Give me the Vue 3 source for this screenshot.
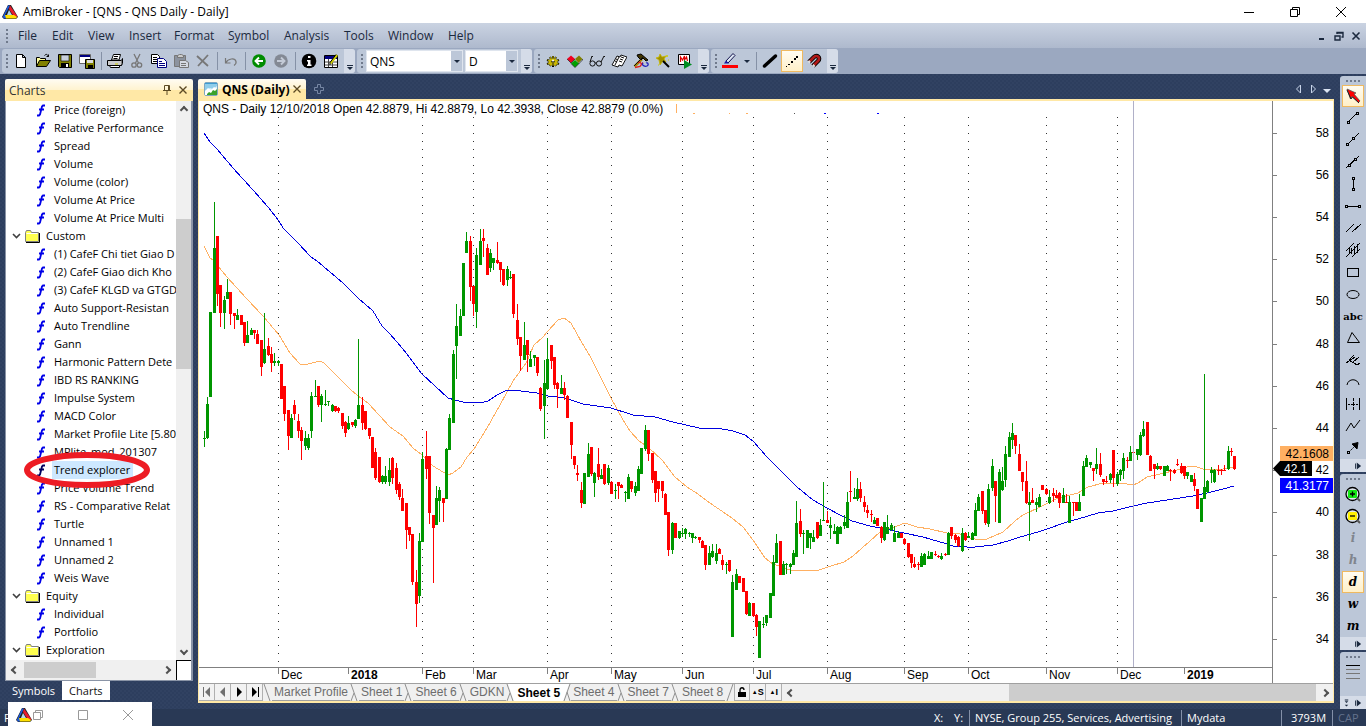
<script setup>
const menus = ['File', 'Edit', 'View', 'Insert', 'Format', 'Symbol', 'Analysis', 'Tools', 'Window', 'Help']

const fileTools = [
  { name: 'New', icon: '<path d="M3.5 1.5h6l3 3v10h-9zM9.500 1.500v3h3" fill="#fff" stroke="#000"/>' },
  { name: 'Open', icon: '<path d="M1.500 13.500v-9h3l1 1h5v2" fill="#ffffa0" stroke="#000"/><path d="M1.500 13.500l3-6h11l-4 6z" fill="#808000" stroke="#000"/><path d="M9.500 2.500c2-2 3-1 4 1m0-2v2h-2" fill="none" stroke="#000"/>' },
  { name: 'Save', icon: '<path d="M1.500 1.500h13v13h-12l-1-1z" fill="#808000" stroke="#000"/><path d="M4 2h8v6H4z" fill="#c8cfda" stroke="#000" stroke-width=".6"/><path d="M4 10h8v4H4z" fill="#000"/><path d="M9 11h2v3H9z" fill="#fff"/>' },
  { name: 'Save all', icon: '<path d="M.5 1.500h11v9H.5z" fill="#fff" stroke="#666"/><path d="M1 2h10v2H1z" fill="#000080"/><path d="M6.500 6.500h9v9h-9z" fill="#808000" stroke="#000"/><path d="M8 7h6v3H8z" fill="#ddd"/><path d="M9 12h5v3H9z" fill="#000"/>' },
  { sep: true },
  { name: 'Print', icon: '<path d="M4.500 7L6.500 1.500h7L12 7z" fill="#fff" stroke="#000"/><path d="M.5 7.500h14v5H.5z" fill="#ccc" stroke="#000"/><path d="M2.500 12.500h10v2h-9zM14.500 7.500l1-2v5l-1 2M7 3.500h4M6.500 5.500h4" fill="#fff" stroke="#000"/><path d="M8 11h3" stroke="#cc0"/>' },
  { name: 'Cut', icon: '<g fill="none" stroke="#777" stroke-width="1.300"><path d="M5 1l4.500 9M11 1L6.500 10"/><circle cx="5" cy="12" r="2.200"/><circle cx="10.500" cy="12" r="2.200"/></g>' },
  { name: 'Copy', icon: '<path d="M.5 1.500h6l2 2v7h-8z" fill="#fff" stroke="#000"/><path d="M2 4.500h4M2 6.500h4M2 8.500h4" stroke="#000"/><path d="M6.500 5.500h6l3 3v6h-9z" fill="#fff" stroke="#000080"/><path d="M8 8.500h3M8 10.500h6M8 12.500h6" stroke="#000080"/>' },
  { name: 'Paste', icon: '<path d="M1.500 2.500h11v11h-11z" fill="#8c939f" stroke="#777"/><path d="M4.500 4.500v-2l2-1h2l2 1v2z" fill="#ccc" stroke="#777"/><path d="M6.500 7.500h6l3 2v5h-9z" fill="#d5dae3" stroke="#777"/><path d="M8 10.500h5M8 12.500h5" stroke="#777"/>' },
  { name: 'Delete', icon: '<path d="M2 3l11 10M13 2L3 13" stroke="#777" stroke-width="1.800"/>' },
  { sep: true },
  { name: 'Undo', icon: '<path d="M2.500 5v5h5M3 9.500c2-4 9-5 10-1 .5 2-.5 3-2 4" fill="none" stroke="#777" stroke-width="1.200"/>' },
  { sep: true },
  { name: 'Back', icon: '<circle cx="8" cy="8" r="6.800" fill="#008c00"/><path d="M12 8H5M8 4.500L4.500 8 8 11.500" fill="none" stroke="#fff" stroke-width="1.900"/>' },
  { name: 'Forward', icon: '<circle cx="8" cy="8" r="6.800" fill="#838994"/><path d="M4 8h7M8 4.500L11.500 8 8 11.500" fill="none" stroke="#c3cad6" stroke-width="1.900"/>' },
  { sep: true },
  { name: 'Information', icon: '<circle cx="8" cy="8" r="7.300" fill="#000"/><path d="M7 3h2.500v2H7zM6 7h3.500v4.500h1V13H6v-1.500h1V8.500H6z" fill="#fff"/>' },
  { name: 'Quote editor', icon: '<path d="M1.500 2.500h13v12h-13z" fill="#fff" stroke="#000"/><path d="M2 3h12v3H2z" fill="#000080"/><path d="M2 9h12M2 12h12M5.500 6v8M9.500 6v8" stroke="#444"/><path d="M7.500 10.500L14 2" stroke="#cc0" stroke-width="2.200"/><path d="M7 12V9.500L13 1.500" fill="none" stroke="#000"/>' },
]

const analysisTools = [
  { name: 'Settings', icon: '<path d="M8 3v3M5 4l1 2M11 4l-1 2M2 7l3 1M14 7l-3 1M2 11l3-1M14 11l-3-1M5 13l1-2M8 14v-3M11 13l-1-2" stroke="#000" stroke-width="2"/><ellipse cx="8" cy="9" rx="4.500" ry="3.500" fill="#c9b800"/><path d="M8 3v3M5 4l1 2M11 4l-1 2M2.500 7l3 1M13.500 7l-3 1M2.500 11l3-1M13.500 11l-3-1M5 13l1-2M11 13l-1-2" stroke="#c9b800" stroke-width="1"/><path d="M6 9l2-1v4M10 9l-2-1" stroke="#222" fill="none"/><circle cx="8" cy="7.500" r="1" fill="#fff"/>' },
  { name: 'Formula', icon: '<path d="M0 6l4-3.500 4 3.500-4 4z" fill="#f00020"/><path d="M8 6l4-3.500L15.500 6l-4 4z" fill="#808000"/><path d="M4 10.500L8 7l4 3.500-4 4z" fill="#00a000"/><path d="M0 6l4 4 4-4M15.500 6v1l-4 4M4 10.500l4 4 4-4" fill="none" stroke="#222" stroke-width=".7"/>' },
  { name: 'Watch', icon: '<g fill="none" stroke="#111"><circle cx="3.500" cy="10.500" r="2.600"/><circle cx="10" cy="10.500" r="2.600"/><path d="M6 10h1.500M1 9l2-6M12 9l3-6 1 1M3 3l1 1"/></g>' },
  { name: 'Report', icon: '<path d="M1 12l5-9 3 1 1-2 6 2-5 9-3-1-1 2z" fill="#fff" stroke="#111"/><path d="M8 4L4 12M10 4l3 1M9 6l3 1M8 8l3 1M5 6l2 1M4 8l2 1" fill="none" stroke="#111"/>' },
  { name: 'Build', icon: '<path d="M1.500 13.500L9 6" stroke="#a88a00" stroke-width="2.500"/><path d="M4 2l4-1 7 6-2 1-3-3-2 2-3-3z" fill="#403400" stroke="#000"/><path d="M1 13l9-9" stroke="#111"/><path d="M5 10l2-1 2 3M2 14.500l5-1 3-4" stroke="#e02020" fill="none" stroke-width="1.300"/><path d="M10 10c-2 2 2 4 4 3s1-4-1-3" stroke="#2020c0" fill="none" stroke-width="1.300"/>' },
  { name: 'Wizard', icon: '<path d="M5 1l2 3 4-1-2 3 2 3-3-1-3 4-1-5-3-2 3-1z" fill="#a09000" stroke="#c6b700" stroke-width=".8"/><path d="M8 8l6 6" stroke="#000" stroke-width="2"/><path d="M11 3h2M12 2v2M3 12h1M13 7h1" stroke="#cc0"/>' },
  { name: 'Scan', icon: '<path d="M1.500 1.500h11v10h-11z" fill="#fff" stroke="#000"/><path d="M3.500 9V4l2 3 2-4v4l2-3 1 4" fill="none" stroke="#e00000" stroke-width="1.200"/><path d="M7 7l8 4.500L7 16z" fill="#008c20"/>' },
]

const line = (extra) => `<g fill="none" stroke="#000" shape-rendering="crispEdges">${extra}</g>`
const knob = (x, y) => `<rect x="${x - 1}" y="${y - 1}" width="2" height="2" fill="#bcc7d8" stroke="#000"/>`

const drawTools = [
  { name: 'Select', active: true, icon: '<path d="M2 1l9 4-2 1 6 7-1.500 1.500L7 8.500 5.500 11z" fill="#f00" stroke="#555" stroke-width=".8"/><path d="M2 2l4 9 1.500-2 6.500 6" fill="none" stroke="#222"/>' },
  { name: 'Trend line', icon: line('<path d="M3 12L12 3"/>' + knob(3.500, 12.500) + knob(12.500, 3.500)) },
  { name: 'Ray', icon: line('<path d="M2 13L14 1"/>' + knob(2.500, 12.500) + knob(8.500, 6.500)) },
  { name: 'Extended line', icon: line('<path d="M1 14L14 2"/>' + knob(4.500, 11.500) + knob(10.500, 5.500)) },
  { name: 'Vertical line', icon: line('<path d="M8.500 2v12"/>' + knob(8.500, 2.500) + knob(8.500, 13.500)) },
  { name: 'Horizontal line', icon: line('<path d="M2 8.500h12"/>' + knob(1.500, 8.500) + knob(14.500, 8.500)) },
  { name: 'Parallel lines', icon: line('<path d="M1 12L9 4M7 12L16 4"/>') },
  { name: 'Channel', icon: line('<path d="M1 9L9 1M1 15L15 1M7 15L15 7M4 6v6M6 6v6M9 4v8M12 2v9"/>') },
  { name: 'Rectangle', icon: line('<path d="M2.500 4.500h11v8h-11z"/>') },
  { name: 'Ellipse', icon: '<ellipse cx="8" cy="8.500" rx="6" ry="4" fill="none" stroke="#000"/>' },
  { name: 'Text', text: 'abc' },
  { name: 'Triangle', icon: '<path d="M7 2.500L2.500 12.500h12z" fill="none" stroke="#000"/>' },
  { name: 'Pitchfork', icon: line('<path d="M1 11L10 5M4 8l8 5M4 8l5-5M8 10l6-5M12 13l3-2"/>') },
  { name: 'Arc', icon: '<path d="M2 11c1-7 11-7 12 0" fill="none" stroke="#000"/>' },
  { name: 'Cycles', icon: line('<path d="M1.500 2v12M14.500 2v12M8.500 2v3M8.500 6v4M8.500 11v3M3 8.500h2M6 8.500h4M11 8.500h2"/>') },
  { name: 'Zig zag', icon: '<path d="M1 13L6 5l3 5 6-8" fill="none" stroke="#000"/>' },
  { name: 'Arrow', icon: '<path d="M4 12l6-6" stroke="#000" stroke-dasharray="2 1"/><path d="M7 4l6-1.500L12 9z" fill="#000" stroke="#000"/><rect x="2.500" y="11.500" width="2" height="2" fill="#bcc7d8" stroke="#000"/>' },
]

const zoomIcon = (fill, glyph) => `<circle cx="7.500" cy="8" r="6.500" fill="#dfe5ee" stroke="#000" stroke-width="1.300"/><path d="M12 12l3 3" stroke="#555" stroke-width="2"/><rect x="3" y="4" width="9" height="8" rx="1" fill="${fill}"/><path d="${glyph}" stroke="#000" stroke-width="1.300"/>`
const zoomTools = [
  { name: 'Zoom in', icon: zoomIcon('#14e614', 'M5 8h5M7.500 5.500v5') },
  { name: 'Zoom out', icon: zoomIcon('#fff000', 'M5 8h5') },
  { name: 'Intraday', text: 'i', dim: true },
  { name: 'Hourly', text: 'h', dim: true },
  { name: 'Daily', text: 'd', active: true },
  { name: 'Weekly', text: 'w' },
  { name: 'Monthly', text: 'm' },
]

const tree = [
  'Price (foreign)', 'Relative Performance', 'Spread', 'Volume', 'Volume (color)', 'Volume At Price',
  'Volume At Price Multi', '>Custom', '(1) CafeF Chi tiet Giao D', '(2) CafeF Giao dich Kho',
  '(3) CafeF KLGD va GTGD', 'Auto Support-Resistan', 'Auto Trendline', 'Gann', 'Harmonic Pattern Dete',
  'IBD RS RANKING', 'Impulse System', 'MACD Color', 'Market Profile Lite [5.80', 'MPlite_mod_201307',
  'Trend explorer', 'Price Volume Trend', 'RS - Comparative Relat', 'Turtle', 'Unnamed 1', 'Unnamed 2',
  'Weis Wave', '>Equity', 'Individual', 'Portfolio', '>Exploration',
].map((t) => ({ folder: t[0] === '>', label: t.replace('>', ''), selected: t === 'Trend explorer' }))

const sheets = ['Market Profile', 'Sheet 1', 'Sheet 6', 'GDKN', 'Sheet 5', 'Sheet 4', 'Sheet 7', 'Sheet 8']

// One bar per entry: x, high, low, body top, body bottom; g = up, r = down.
const bars = `204 431 447 438 439 g,207 397 439 404 438 g,210 312 397 312 397 g,214 202 313 248 313 g,217 236 306 236 294 r,220 285 327 285 313 r,224 296 329 300 313 g,227 279 299 292 299 g,230 292 325 292 314 r,234 313 329 313 316 r,237 309 320 315 320 g,241 315 325 315 325 r,244 322 346 322 343 r,247 321 343 335 343 g,251 328 335 330 335 g,254 330 339 330 333 r,257 330 344 334 344 r,261 340 376 340 367 r,264 313 364 349 363 g,268 338 356 346 355 r,271 347 372 354 363 r,274 353 366 361 363 g,278 360 366 361 363 g,281 364 399 364 399 r,284 386 421 386 414 r,288 410 450 410 436 r,291 414 438 418 438 g,294 400 420 405 414 r,298 414 438 421 431 r,301 427 460 430 441 r,305 431 450 438 446 g,308 434 450 438 448 g,311 392 438 396 431 g,315 380 397 396 397 g,318 386 407 386 405 r,321 394 422 396 405 g,325 390 406 404 405 g,328 401 406 401 402 g,332 404 412 405 411 g,335 406 412 406 411 r,338 407 413 408 411 r,342 413 429 413 426 r,345 421 437 422 433 r,348 416 430 423 429 g,352 422 427 422 425 r,355 419 428 420 426 g,358 339 419 405 419 g,362 397 430 405 423 r,365 411 430 411 429 r,369 428 439 428 436 r,372 437 468 437 468 r,375 448 480 452 478 r,379 457 483 457 482 r,382 475 484 476 482 g,385 466 484 476 482 g,389 458 486 470 482 g,392 457 484 458 478 r,396 463 494 468 490 r,399 482 500 484 497 r,402 489 511 498 511 r,406 503 549 503 530 r,409 527 541 527 535 r,412 534 585 534 582 r,416 570 627 582 604 r,419 533 603 541 596 g,422 452 542 459 542 g,426 431 479 456 469 r,429 456 524 456 513 r,433 515 583 515 528 r,436 486 525 498 525 g,439 487 522 490 501 g,443 498 522 498 503 r,446 448 499 449 499 g,449 414 450 418 450 g,453 350 423 354 423 g,456 304 379 326 346 g,460 309 336 316 336 g,463 263 316 263 316 g,466 232 253 241 253 g,470 236 301 241 287 r,473 286 316 286 304 r,476 248 328 255 312 g,480 229 265 241 265 g,483 229 257 238 241 r,487 244 275 248 275 r,490 249 272 253 268 g,493 258 270 258 263 g,497 242 264 260 263 r,500 262 282 262 270 r,503 269 286 269 285 r,507 266 286 269 280 g,510 271 279 277 278 g,513 274 318 274 314 r,517 304 345 320 339 r,520 337 371 337 356 r,524 322 360 345 360 g,527 340 372 340 355 r,530 351 367 359 367 g,534 355 366 355 358 g,537 357 376 357 373 r,540 387 411 388 409 r,544 360 439 383 406 g,547 338 390 359 389 g,551 345 369 345 361 r,554 357 389 357 385 r,557 382 408 383 389 r,561 375 394 388 394 g,564 382 400 388 395 r,567 395 418 396 418 r,571 422 459 422 445 r,574 456 469 456 465 r,577 465 481 473 475 r,581 482 508 490 503 r,584 473 504 473 504 g,588 443 477 454 477 g,591 447 476 447 474 r,594 472 497 473 483 g,598 448 480 464 477 r,601 469 479 475 479 g,604 464 485 464 484 r,608 465 485 468 483 g,611 481 494 482 494 r,615 484 499 490 491 g,618 482 499 482 486 r,621 484 488 485 488 r,625 491 502 492 493 g,628 474 499 477 499 g,631 481 492 481 489 r,635 482 496 486 493 g,638 466 491 469 491 g,641 448 474 448 474 g,645 425 451 430 449 g,648 430 461 430 454 r,652 453 483 453 480 r,655 471 502 471 493 r,658 481 502 481 489 r,662 481 498 481 491 r,665 493 515 494 515 r,668 512 556 512 550 r,672 522 554 523 550 g,675 523 538 523 538 r,679 531 539 531 538 g,682 528 537 533 534 g,685 528 539 529 534 g,689 532 537 533 534 g,692 533 543 533 538 g,695 536 539 537 538 g,699 537 543 537 540 r,702 540 548 541 548 r,705 545 570 545 565 r,709 546 565 553 565 g,712 544 558 551 557 g,716 544 564 553 561 g,719 548 554 549 554 r,722 555 570 560 565 r,726 562 574 564 565 g,729 560 572 560 571 r,732 575 637 582 637 g,736 569 590 574 590 g,739 576 583 576 583 r,743 578 592 578 592 r,746 591 615 591 614 r,749 602 616 603 616 g,753 603 617 603 616 r,756 614 636 615 627 r,759 621 658 621 658 g,763 617 628 624 625 g,766 615 626 615 623 g,770 593 618 593 618 g,773 555 596 562 596 g,776 534 563 543 563 g,780 541 575 541 575 r,783 561 575 564 575 g,786 563 574 564 565 g,790 563 574 564 567 g,793 550 565 553 565 g,796 501 557 523 557 g,800 509 537 521 534 r,803 530 554 533 534 g,807 530 548 530 548 g,810 533 549 533 538 g,813 530 542 537 542 g,817 522 539 522 538 r,820 519 536 525 536 g,823 482 521 520 521 g,827 511 523 520 523 r,830 517 539 525 528 g,834 524 534 531 534 g,837 526 544 527 544 g,840 526 534 527 534 g,844 515 529 522 526 g,847 492 528 502 528 g,850 471 502 491 492 r,854 488 499 497 499 g,857 478 501 489 499 g,860 482 502 489 498 r,864 496 512 502 507 r,867 505 518 510 513 r,871 510 522 514 515 r,874 517 524 520 524 g,877 518 526 518 526 r,881 526 543 527 538 r,884 522 541 522 540 g,887 515 534 527 534 g,891 523 531 525 530 g,894 526 542 533 542 g,898 531 538 533 538 g,901 533 538 533 538 r,904 538 545 539 544 r,908 543 558 543 557 r,911 554 568 554 563 r,914 557 568 564 567 r,918 562 570 564 565 r,921 553 567 556 567 g,924 553 565 554 565 g,928 551 559 556 559 g,931 552 559 552 559 g,935 551 556 554 555 r,938 555 558 556 557 r,941 553 560 556 559 g,945 553 556 554 555 r,948 532 555 533 555 g,951 527 539 527 536 r,955 534 543 535 540 r,958 536 547 537 546 r,962 528 552 533 551 g,965 532 541 533 540 r,968 532 538 536 538 g,972 532 540 533 540 g,975 503 536 510 536 g,978 494 511 497 511 g,982 491 514 491 511 r,985 510 525 510 523 r,988 484 527 489 524 g,992 459 491 466 488 g,995 481 522 481 496 r,999 469 523 472 523 g,1002 467 491 481 490 g,1005 446 487 454 480 g,1009 432 457 437 457 g,1012 423 449 433 440 g,1015 435 454 435 446 r,1019 444 471 454 471 r,1022 472 491 472 482 r,1026 461 504 481 503 r,1029 492 541 502 505 g,1032 488 503 500 503 r,1036 498 512 502 505 g,1039 494 507 497 507 g,1042 485 490 485 490 r,1046 488 495 489 494 r,1049 490 504 497 503 g,1053 488 502 493 496 r,1056 490 498 495 498 r,1059 492 508 493 503 r,1063 488 503 495 503 g,1066 494 503 502 503 r,1069 496 523 502 523 g,1073 502 516 502 503 r,1076 502 511 502 511 r,1079 494 511 502 511 g,1083 461 496 466 496 g,1086 455 467 458 467 g,1090 462 468 462 465 g,1093 468 481 468 471 r,1096 448 474 464 469 g,1100 453 477 464 475 r,1103 479 485 479 482 r,1106 476 483 481 482 r,1110 473 483 474 480 g,1113 450 487 450 478 r,1117 472 486 474 484 g,1120 469 481 470 475 g,1123 453 479 458 471 g,1127 457 468 460 461 r,1130 446 461 452 461 g,1133 452 462 452 453 r,1137 449 460 449 455 g,1140 432 456 435 455 g,1143 421 437 429 436 g,1147 422 455 422 455 r,1150 455 471 456 471 r,1154 464 479 464 469 r,1157 463 470 466 469 g,1160 466 470 466 469 r,1164 466 476 466 476 g,1167 465 471 466 471 g,1170 469 481 470 471 r,1174 469 474 470 473 r,1177 459 466 464 465 r,1181 463 474 466 473 r,1184 466 479 466 476 r,1187 472 479 472 476 g,1191 475 482 475 482 g,1194 473 491 479 486 r,1197 489 509 489 509 r,1201 498 522 498 522 g,1204 374 499 487 499 g,1207 480 493 481 492 g,1211 467 483 470 473 g,1214 469 483 470 482 g,1218 465 475 470 471 r,1221 469 475 470 471 r,1224 465 471 470 471 r,1228 446 470 451 469 g,1231 448 456 451 452 r,1234 456 470 456 469 r`
  .split(',')
  .map((s) => {
    const p = s.split(' ')
    const [x, hi, lo, top, bottom] = p.map(Number)
    return { x, hi, lo, top, bottom, fill: p[5] === 'g' ? '#009600' : '#ff0000' }
  })

const slowAverage = '204,133 210,142 217,149 233,168 253,190 268,207 279,221 283,228 297,242 311,257 317,261 343,283 358,298 373,311 382,326 390,334 403,349 422,374 448,398 455,400 463,402 480,403 488,401 497,395 507,390 513,390 537,393 548,396 565,398 583,404 611,408 633,415 655,417 673,422 699,428 717,428 733,431 745,435 753,441 767,457 780,470 797,487 813,500 827,508 840,515 852,521 870,526 890,530 904,533 923,537 947,544 953,546 967,547 975,547 993,545 1008,541 1020,537 1038,532 1047,529 1067,522 1078,519 1098,513 1113,511 1133,506 1147,503 1167,500 1193,496 1207,493 1223,489 1234,486'
const fastAverage = '204,246 210,258 213,260 227,277 247,299 263,316 279,335 290,353 300,364 308,364 320,361 324,363 333,372 350,389 358,396 368,403 390,427 403,436 413,448 422,455 433,466 448,475 453,473 461,467 467,457 474,449 487,428 500,405 513,381 526,363 534,345 543,337 547,332 558,320 564,318 571,323 582,343 590,356 602,380 611,398 623,420 630,431 639,441 648,447 663,461 675,477 687,487 698,494 707,501 732,518 743,527 753,540 765,558 773,564 790,570 819,570 828,567 844,562 853,556 870,541 880,532 887,530 905,523 917,527 930,529 947,533 960,534 970,538 975,539 987,539 1003,532 1015,521 1023,515 1040,507 1058,498 1078,493 1088,487 1103,483 1120,483 1133,485 1138,483 1147,477 1160,474 1177,470 1190,466 1197,467 1203,469 1223,469 1234,467'

const months = [
  [278, 'Dec'], [348, '2018'], [422, 'Feb'], [473, 'Mar'], [547, 'Apr'], [611, 'May'], [682, 'Jun'], [753, 'Jul'],
  [827, 'Aug'], [904, 'Sep'], [968, 'Oct'], [1046, 'Nov'], [1117, 'Dec'], [1184, '2019'],
].map(([x, label]) => ({ x, label, year: label.startsWith('20') }))

const prices = [[58, 133], [56, 175], [54, 217], [52, 259], [50, 301], [48, 344], [46, 386], [44, 428], [42, 470], [40, 512], [38, 555], [36, 597], [34, 639]]
  .map(([label, y]) => ({ label, y }))
</script>

<template>
  <div class="app">
    <header class="title">
      <svg class="logo" viewBox="0 0 16 16" aria-hidden="true">
        <path d="M6 1h3l7 12-2 2H2l-2-2z" fill="#222" />
        <path d="M6 1.500h2L3 11l2 2-1 1.500H2L.8 13z" fill="#1d5ce0" />
        <path d="M8 1.500l7.500 11-3 1L7 5z" fill="#e81c2c" />
        <path d="M3 11h9l3 2-1 1.500H4z" fill="#ffe000" />
        <path d="M7 6l3 5H5z" fill="#b8d8e8" />
      </svg>
      <span class="caption">AmiBroker - [QNS - QNS Daily - Daily]</span>
      <div class="win-buttons">
        <button aria-label="Minimize"><svg viewBox="0 0 12 12"><path d="M1 6.500h10" /></svg></button>
        <button aria-label="Restore"><svg viewBox="0 0 12 12"><path d="M1.500 3.500h7v7h-7zM3.500 3.500v-2h7v7h-2" /></svg></button>
        <button aria-label="Close"><svg viewBox="0 0 12 12"><path d="M1 1l10 10M11 1L1 11" /></svg></button>
      </div>
    </header>

    <nav class="menu">
      <i class="grip"></i>
      <div class="menu-items"><button v-for="m in menus" :key="m">{{ m }}</button></div>
      <div class="mdi-buttons">
        <button aria-label="Minimize document"><svg viewBox="0 0 10 10"><path d="M2 8h5" stroke-width="2" /></svg></button>
        <button aria-label="Restore document"><svg viewBox="0 0 10 10"><path d="M1 5h5v4H1zM3 3V1.500h6V6H7.500M3 2h6" stroke-width="1.400" /></svg></button>
        <button aria-label="Close document"><svg viewBox="0 0 10 10"><path d="M1.500 1.500l7 7M8.500 1.500l-7 7" stroke-width="1.600" /></svg></button>
      </div>
    </nav>

    <div class="toolbars">
      <div class="bar">
        <i class="grip"></i>
        <template v-for="(t, i) in fileTools" :key="i">
          <i v-if="t.sep" class="sep"></i>
          <button v-else class="tool" :aria-label="t.name"><svg viewBox="0 0 16 16" v-html="t.icon"></svg></button>
        </template>
        <button class="more" aria-label="More file tools"></button>
      </div>
      <div class="bar">
        <i class="grip"></i>
        <div class="combo symbol"><select aria-label="Symbol"><option>QNS</option></select><i></i></div>
        <div class="combo interval"><select aria-label="Interval"><option>D</option></select><i></i></div>
        <button class="more" aria-label="More symbol tools"></button>
      </div>
      <div class="bar">
        <i class="grip"></i>
        <button v-for="t in analysisTools" :key="t.name" class="tool" :aria-label="t.name"><svg viewBox="0 0 16 16" v-html="t.icon"></svg></button>
        <button class="more" aria-label="More analysis tools"></button>
      </div>
      <div class="bar">
        <i class="grip"></i>
        <button class="tool" aria-label="Line color">
          <svg viewBox="0 0 16 16"><path d="M0 12h16v3H0z" fill="#f00" /><path d="M4 8l7-7.500 2 2L6 10z" fill="#dfe8f4" stroke="#10104a" /><path d="M2 10.500l2-3 3 3z" fill="#1818a0" /></svg>
        </button>
        <button class="drop" aria-label="Choose line color"></button>
        <i class="sep"></i>
        <button class="tool" aria-label="Thick line"><svg viewBox="0 0 16 16"><path d="M2.500 13L13.500 3" stroke="#000" stroke-width="3.500" stroke-linecap="round" /></svg></button>
        <button class="tool active" aria-label="Dotted line"><svg viewBox="0 0 16 16" shape-rendering="crispEdges"><path d="M2 13h1v1H2zM4 11h2v1H4zM7 8h2v2H7zM10 5h2v2h-2zM12 3h2v2h-2z" fill="#000" /></svg></button>
        <button class="tool" aria-label="Snap to price">
          <svg viewBox="0 0 16 16"><path d="M3 9l5-5c3-3 7 1 4 4l-5 5" fill="none" stroke="#000" stroke-width="4.500" /><path d="M3.500 8.500l4.500-4.500c3-3 7 1 4 4l-4.500 4.500" fill="none" stroke="#b01818" stroke-width="2.600" /><path d="M2.500 9.500L4 8M7 13.500L8.500 12" stroke="#ddd" stroke-width="2.500" /></svg>
        </button>
        <button class="more" aria-label="More line tools"></button>
      </div>
    </div>

    <main class="work">
      <aside class="charts-pane">
        <div class="pane-head">
          <h2>Charts</h2>
          <button aria-label="Pin"><svg viewBox="0 0 10 10"><path d="M2.500 .5h5v5h-5zM6.500 .5v5M1 5.500h8M5 6v4" /></svg></button>
          <button aria-label="Close pane"><svg viewBox="0 0 10 10"><path d="M1.500 1.500l7 7M8.500 1.500l-7 7" stroke-width="1.400" /></svg></button>
        </div>
        <div class="tree-box">
          <ul class="tree">
            <li v-for="n in tree" :key="n.label" :class="{ folder: n.folder, selected: n.selected }">
              <template v-if="n.folder">
                <svg class="chev" viewBox="0 0 9 6"><path d="M1 1l3.500 3.500L8 1" /></svg>
                <svg class="dir" viewBox="0 0 15 13"><path d="M.5 11.500v-9l1-2h4l1 2h7v9z" fill="#ffff50" stroke="#808080" /><path d="M1 12.500h13.500V3" fill="none" stroke="#000" /><path d="M1.500 3.500h11" stroke="#fff" /></svg>
              </template>
              <svg v-else class="fn" viewBox="0 0 10 13"><path d="M9 1.500H7L6 2.500 4 10.500 3 11.500H1M3 5.500h5" /></svg>
              <span>{{ n.label }}</span>
            </li>
          </ul>
          <div class="vscroll"><button class="up" aria-label="Scroll up"></button><i class="thumb"></i><button class="down" aria-label="Scroll down"></button></div>
          <div class="hscroll"><button class="left" aria-label="Scroll left"></button><i class="thumb"></i><button class="right" aria-label="Scroll right"></button></div>
          <i class="corner"></i>
          <svg class="marker" viewBox="0 0 128 38" aria-hidden="true"><ellipse cx="64" cy="19" rx="60" ry="15" /></svg>
        </div>
        <div class="pane-tabs"><button>Symbols</button><button class="current">Charts</button></div>
      </aside>

      <section class="document">
        <div class="doc-tabs">
          <div class="doc-tab">
            <svg class="doc-icon" viewBox="0 0 14 14"><rect x=".5" y=".5" width="13" height="13" rx="1.500" fill="#d9f1fb" stroke="#7fa6c0" /><path d="M1 1h12v3l-4 3-3-1-5 3z" fill="#8fcdea" /><path d="M1 9l3-3 3 2 3-3 3 2v6H1z" fill="#fff" /><path d="M3 13v-1l2-2 2 1 2-3 2 1 2-2v6z" fill="#3aa22a" /><path d="M1 1h12v1H1z" fill="#3d9bd0" /></svg>
            <span>QNS (Daily)</span>
            <button aria-label="Close tab"><svg viewBox="0 0 10 10"><path d="M1.500 1.500l7 7M8.500 1.500l-7 7" stroke-width="1.300" /></svg></button>
          </div>
          <button class="add" aria-label="New tab"><svg viewBox="0 0 12 12"><path d="M4.500 1.500h3v3h3v3h-3v3h-3v-3h-3v-3h3z" /></svg></button>
          <div class="doc-nav">
            <button aria-label="Previous tab"><svg viewBox="0 0 8 10"><path d="M5.500 1v8L1.500 5z" fill="none" stroke="#c8d4e8" /></svg></button>
            <button aria-label="Next tab"><svg viewBox="0 0 8 10"><path d="M2.500 1v8L6.500 5z" fill="none" stroke="#c8d4e8" /></svg></button>
            <button aria-label="Tab list"><svg viewBox="0 0 8 10"><path d="M0 5h8L4 9z" fill="#dbe4f2" /></svg></button>
          </div>
        </div>

        <div class="frame">
          <svg class="chart" viewBox="199 101 1134 582" role="img" aria-label="QNS daily price chart">
            <text x="203" y="113">QNS - Daily 12/10/2018 Open 42.8879, Hi 42.8879, Lo 42.3938, Close 42.8879 (0.0%)</text>
            <g shape-rendering="crispEdges">
              <g stroke="#333" stroke-dasharray="1 7">
                <line v-for="m in months.filter((q) => !q.year)" :key="m.x" :x1="m.x + .5" :x2="m.x + .5" y1="117" y2="666" />
              </g>
              <path d="M676 104h1v9h-1zM693 113h2v1h-2zM729 113h1v1h-1zM746 113h2v1h-2z" fill="#ffb062" />
              <path d="M794 113h1v1h-1z" fill="#555" />
              <path d="M824 113h2v1h-2zM877 113h2v1h-2z" fill="#00f" />
              <polyline :points="fastAverage" fill="none" stroke="#ffb062" />
              <polyline :points="slowAverage" fill="none" stroke="#0000e0" />
              <g v-for="b in bars" :key="b.x" :fill="b.fill">
                <rect :x="b.x" :y="b.hi" width="1" :height="b.lo - b.hi" />
                <rect :x="b.x - 1" :y="b.top" width="3" :height="b.bottom - b.top" />
              </g>
              <path d="M1133.500 101v566" stroke="#b0b0c8" />
              <path d="M199 667.500h1074M1272.500 101v582" stroke="#808080" fill="none" />
              <path v-for="m in months" :key="m.x" :d="`M${m.x + .5} 668v6`" stroke="#808080" />
              <path v-for="p in prices" :key="p.y" :d="`M1273 ${p.y + .5}h4`" stroke="#808080" />
            </g>
            <text v-for="m in months" :key="m.x" :x="m.x + 3" y="679" :class="{ year: m.year }">{{ m.label }}</text>
            <text v-for="p in prices" :key="p.y" x="1329" :y="p.y + 4" text-anchor="end">{{ p.label }}</text>
            <rect x="1280" y="446" width="53" height="15" fill="#ffb062" />
            <text x="1329" y="458" text-anchor="end">42.1608</text>
            <path d="M1273 468.500l7-7.500h32v15h-32z" fill="#000" />
            <text x="1284" y="473" class="light">42.1</text>
            <rect x="1280" y="478" width="53" height="15" fill="#0000ff" />
            <text x="1329" y="490" text-anchor="end" class="light">41.3177</text>
          </svg>

          <div class="sheet-row">
            <button class="nav" aria-label="First sheet"><svg viewBox="0 0 10 10"><path d="M1 0h1v10H1zM8 0v10L3 5z" fill="#707070" /></svg></button>
            <button class="nav" aria-label="Previous sheet"><svg viewBox="0 0 10 10"><path d="M7 0v10L2 5z" fill="#707070" /></svg></button>
            <button class="nav" aria-label="Next sheet"><svg viewBox="0 0 10 10"><path d="M3 0v10l5-5z" /></svg></button>
            <button class="nav" aria-label="Last sheet"><svg viewBox="0 0 10 10"><path d="M2 0v10l5-5zM8 0h1v10H8z" /></svg></button>
            <svg class="slant" viewBox="0 0 9 17"><path d="M1 0l6 17" /></svg>
            <template v-for="s in sheets" :key="s">
              <button class="sheet" :class="{ current: s === 'Sheet 5' }">{{ s }}</button>
              <svg class="slant" viewBox="0 0 9 17">
                <path v-if="s === 'GDKN'" d="M2 0h7v17H8z" class="white" />
                <path v-if="s === 'Sheet 5'" d="M0 0h7L1 17H0z" class="white" />
                <path v-if="s === 'Sheet 5'" d="M8 0L2 17M5 8l3 9" />
                <path v-else-if="s === 'Sheet 8'" d="M8 0L2 17" />
                <path v-else d="M1 0l6 17M4 9L1 17" />
              </svg>
            </template>
            <button class="nav lock" aria-label="Lock"><svg viewBox="0 0 10 10"><path d="M1 5h8v5H1z" /><path d="M3 5V3c0-3 4-3 4 0" fill="none" stroke="#000" stroke-width="1.300" /></svg></button>
            <button class="nav"><small>▲</small>S</button>
            <button class="nav"><small>▲</small>I</button>
            <div class="track"><button class="left" aria-label="Scroll chart left"></button><i class="space"></i><i class="thumb"></i><button class="right" aria-label="Scroll chart right"></button></div>
          </div>
        </div>
      </section>

      <aside class="rail">
        <div class="rail-group">
          <i class="hgrip"></i>
          <button v-for="t in drawTools" :key="t.name" class="tool" :class="{ active: t.active }" :aria-label="t.name">
            <b v-if="t.text" class="abc">{{ t.text }}</b><svg v-else viewBox="0 0 16 16" v-html="t.icon"></svg>
          </button>
          <button class="rail-more" aria-label="More drawing tools"><svg viewBox="0 0 8 8"><path d="M0 1h1v6H0zM2 0v8l5-4z" /></svg></button>
        </div>
        <div class="rail-group">
          <i class="hgrip"></i>
          <button v-for="t in zoomTools" :key="t.name" class="tool" :class="{ active: t.active, dim: t.dim }" :aria-label="t.name">
            <b v-if="t.text" class="period">{{ t.text }}</b><svg v-else viewBox="0 0 16 16" v-html="t.icon"></svg>
          </button>
          <button class="rail-more" aria-label="More views"><svg viewBox="0 0 8 8"><path d="M0 1h1v6H0zM2 0v8l5-4z" /></svg></button>
        </div>
        <div class="rail-group last">
          <i class="hgrip"></i>
          <button class="tool" aria-label="Line style"><svg viewBox="0 0 16 16" shape-rendering="crispEdges"><path d="M1 1.500h14" stroke="#000" /><path d="M1 5.500h14M1 9.500h14M1 14.500h14" stroke="#777" /></svg></button>
          <button class="rail-more" aria-label="More styles">
            <svg class="fold" viewBox="0 0 8 8"><path d="M2 0h4v1H2zM2 2h4L4 4zM2 6h4L4 8z" /></svg>
            <svg viewBox="0 0 8 8"><path d="M0 1h1v6H0zM2 0v8l5-4z" /></svg>
          </button>
        </div>
      </aside>
    </main>

    <footer class="status">
      <span class="help">For Help, press F1</span>
      <span class="cell xy">X:</span><span class="cell xy">Y:</span>
      <span class="cell group">NYSE, Group 255, Services, Advertising</span>
      <span class="cell db">Mydata</span>
      <span class="cell mem">3793M</span>
      <span class="cell cap">CAP</span>
    </footer>

    <div class="mini">
      <svg class="logo" viewBox="0 0 16 16" aria-hidden="true">
        <path d="M6 1h3l7 12-2 2H2l-2-2z" fill="#222" />
        <path d="M6 1.500h2L3 11l2 2-1 1.500H2L.8 13z" fill="#1d5ce0" />
        <path d="M8 1.500l7.500 11-3 1L7 5z" fill="#e81c2c" />
        <path d="M3 11h9l3 2-1 1.500H4z" fill="#ffe000" />
        <path d="M7 6l3 5H5z" fill="#b8d8e8" />
      </svg>
      <button aria-label="Restore window"><svg viewBox="0 0 12 12"><path d="M1.500 3.500h7v7h-7zM3.500 3.500v-2h7v7h-2" /></svg></button>
      <button aria-label="Maximize window"><svg viewBox="0 0 12 12"><path d="M1.500 1.500h9v9h-9z" /></svg></button>
      <button aria-label="Close window"><svg viewBox="0 0 12 12"><path d="M1 1l10 10M11 1L1 11" /></svg></button>
    </div>
  </div>
</template>

<style>
body { margin: 0; background: #293955; }
</style>

<style scoped>
.app { position: relative; display: flex; flex-direction: column; min-height: 100vh; overflow: hidden; font: 11px "Open Sans", "Noto Sans", sans-serif; color: #000; background: #293955; }
.app *, .app *::before, .app *::after { box-sizing: border-box; }
button { display: flex; align-items: center; justify-content: center; margin: 0; padding: 0; border: 0; background: none; font: inherit; color: inherit; white-space: nowrap; }
svg { display: block; flex: none; }
ul, h2 { margin: 0; padding: 0; font: inherit; list-style: none; }

.title { display: flex; align-items: center; height: 23px; padding-left: 2px; background: #fff; }
.logo { width: 16px; height: 16px; }
.caption { flex: 1; padding-left: 5px; font-size: 12px; }
.win-buttons { display: flex; padding-right: 2px; }
.win-buttons button { width: 46px; height: 22px; }
.win-buttons svg { width: 12px; height: 12px; fill: none; stroke: #000; }

.menu { display: flex; align-items: center; height: 25px; padding-left: 6px; background: linear-gradient(#cad3e2, #aeb9cd); color: #1b293e; }
.grip { flex: none; width: 2px; height: 14px; background: repeating-linear-gradient(#707a8c 0 2px, transparent 2px 4px); }
.menu-items { display: grid; grid-template-columns: 34px 36px 41px 45px 54px 56px 60px 44px 60px 40px; padding-left: 10px; font-size: 12px; }
.menu-items button { justify-content: flex-start; }
.mdi-buttons { display: flex; margin-left: auto; padding-right: 5px; gap: 7px; }
.mdi-buttons svg { width: 10px; height: 10px; fill: none; stroke: #1b293e; }

.toolbars { display: flex; gap: 2px; height: 26px; padding: 1px 0 1px 2px; background: #9ba8c0; }
.bar { display: flex; align-items: center; height: 24px; padding-left: 4px; border-radius: 3px; background: #bcc7d8; }
.bar > .grip { margin-right: 2px; }
.tool { flex: none; width: 22px; height: 22px; border: 1px solid transparent; }
.tool svg { width: 16px; height: 16px; }
.tool.active { border-color: #efb960; background: linear-gradient(#fffcf2, #fff0c8); }
.sep { flex: none; width: 1px; height: 18px; margin: 0 2px 0 3px; background: #8591a6; }
.more { position: relative; align-self: stretch; width: 11px; margin-left: 2px; border-radius: 0 3px 3px 0; background: #d5dce8; }
.more::before { content: ""; position: absolute; left: 3px; top: 16px; width: 6px; border-top: 1px solid #1b293e; }
.more::after { content: ""; position: absolute; left: 3px; top: 18px; border: 3px solid transparent; border-top-color: #1b293e; border-bottom: 0; }
.drop { width: 12px; height: 22px; }
.drop::before, .combo i::before { content: ""; border: 3px solid transparent; border-top-color: #1b293e; border-bottom: 0; }
.combo { display: flex; height: 22px; margin: 0 1px; border: 1px solid #dfe5ee; background: #fff; }
.combo select { flex: 1; min-width: 0; padding: 0 0 0 3px; border: 0; appearance: none; background: #fff; font: 12px "Open Sans", sans-serif; color: #000; }
.combo i { display: flex; align-items: center; justify-content: center; width: 11px; background: #bcc7d8; }
.symbol { width: 97px; }
.interval { width: 53px; }

.work { display: grid; grid-template-columns: 188px minmax(0, 1fr) 26px; column-gap: 5px; min-height: 634px; padding-left: 5px; background: #2d3e5e repeating-conic-gradient(#2d3e5e 0 25%, #314262 0 50%) 0 0 / 4px 4px; }
.charts-pane { padding-top: 5px; }
.pane-head { display: flex; align-items: center; gap: 6px; height: 22px; padding: 0 5px 0 4px; border-radius: 2px 2px 0 0; background: linear-gradient(#fffcf3 0, #fff3cf 50%, #ffe8a6 50% 100%); color: #4b3c1d; }
.pane-head h2 { flex: 1; font-size: 12px; color: #333; }
.pane-head svg, .doc-tab button svg { width: 10px; height: 10px; fill: none; stroke: #5c4a24; }
.tree-box { position: relative; display: grid; grid-template-columns: minmax(0, 1fr) 15px; grid-template-rows: auto 20px; border: 1px solid #8a94a6; border-width: 0 2px 1px 1px; background: #fff; }
.tree { overflow: hidden; padding-bottom: 1px; }
.tree li { display: flex; align-items: center; height: 18px; padding-left: 30px; white-space: nowrap; }
.tree li.folder { padding-left: 6px; }
.fn { width: 10px; height: 13px; margin-right: 6px; fill: none; stroke: #0000e8; stroke-width: 1.8; }
.tree span { padding: 0 3px 0 2px; line-height: 18px; }
.selected span { background: #cde8ff; }
.selected .fn { stroke: #000060; }
.chev { width: 9px; height: 6px; margin-right: 4px; fill: none; stroke: #404040; stroke-width: 1.6; }
.dir { width: 15px; height: 13px; margin-right: 4px; }
.vscroll, .hscroll, .track { display: flex; background: #f0f0f0; }
.vscroll { flex-direction: column; }
.vscroll button { height: 18px; }
.vscroll .thumb { height: 150px; margin: 100px 0 auto; }
.hscroll button { width: 18px; }
.hscroll .thumb { width: 72px; height: 16px; margin: 2px auto 0 0; }
.thumb { background: #cdcdcd; }
.corner { border: 1px solid #000; border-width: 1px 0 0 1px; }
.up::before, .down::before, .left::before, .right::before { content: ""; width: 6px; height: 6px; border: solid #505050; border-width: 2px 0 0 2px; }
.up::before { transform: rotate(45deg); }
.down::before { transform: rotate(225deg); }
.left::before { transform: rotate(-45deg); }
.right::before { transform: rotate(135deg); }
.marker { position: absolute; left: 17px; top: 350px; width: 128px; height: 38px; fill: none; stroke: #ed1c24; stroke-width: 6px; }
.pane-tabs { display: flex; color: #fff; }
.pane-tabs button { height: 19px; padding: 0 7px; }
.pane-tabs .current { background: #fff; color: #111; }

.document { padding-top: 5px; margin-right: 1px; }
.doc-tabs { display: flex; align-items: center; height: 20px; }
.doc-tab { display: flex; align-items: center; height: 20px; padding: 0 4px 0 6px; border-radius: 2px 2px 0 0; background: linear-gradient(#fffcf3 0, #fff3cf 50%, #ffe8a6 50% 100%); }
.doc-tab span { padding: 0 3px 0 4px; font-size: 12px; font-weight: 700; }
.doc-icon { width: 14px; height: 14px; }
.add { margin-left: 7px; }
.add svg { width: 12px; height: 12px; fill: none; stroke: #7787a4; }
.doc-nav { display: flex; gap: 6px; margin-left: auto; padding-right: 3px; }
.doc-nav svg { width: 8px; height: 10px; }
.frame { border: 1px solid #ffe8a6; border-width: 2px 1px; background: #fff; }
.chart { width: 100%; height: auto; font: 12px "Liberation Sans", Arial, sans-serif; }
.chart .year { font-weight: 700; }
.chart .light { fill: #fff; }
.sheet-row { display: flex; align-items: stretch; height: 18px; background: #f0f0f0; font: 12px "Liberation Sans", Arial, sans-serif; border-top: 1px solid #a0a0a0; }
.nav { flex: none; width: 16px; border: 1px solid #b0b0b0; border-width: 0 1px 1px 0; background: #f2f2f2; font: 700 9px "Liberation Sans", Arial, sans-serif; }
.nav svg { width: 10px; height: 10px; }
.nav small { font-size: 6px; }
.lock { border-left-width: 1px; }
.slant { width: 9px; height: 17px; fill: none; stroke: #909090; }
.slant .white { fill: #fff; stroke: none; }
.sheet { padding: 0 2px; border-bottom: 1px solid #a0a0a0; color: #6d6d6d; line-height: 14px; }
.sheet.current { border: 0; background: #fff; color: #000; font-weight: 700; }
.track { flex: 1; }
.track button { width: 17px; }
.track .space { flex: 209; }
.track .thumb { flex: 307; }

.rail { padding-top: 2px; }
.rail-group { display: flex; flex-direction: column; align-items: center; margin-bottom: 2px; border-radius: 3px 0 0 3px; background: #bcc7d8; }
.hgrip { width: 14px; height: 2px; margin: 4px 0 3px; background: repeating-linear-gradient(90deg, #707a8c 0 2px, transparent 2px 4px); }
.rail-more { align-self: stretch; justify-content: flex-end; gap: 5px; height: 13px; padding-right: 4px; background: #d5dce8; }
.rail-more svg { width: 7px; height: 8px; fill: #1b293e; }
.abc { font: 700 10px "DejaVu Serif", serif; }
.period { font: italic 700 12px "DejaVu Serif", serif; }
.dim { color: #80858e; }
.last { margin-bottom: 0; }
.last .rail-more { margin-top: 13px; }

.status { display: flex; align-items: center; flex: 1; min-height: 18px; padding-left: 4px; color: #fff; font-size: 11px; line-height: 16px; white-space: nowrap; }
.help { flex: 1; }
.cell { padding: 0 5px; border-left: 1px solid #8390a8; }
.xy { width: 20px; border: 0; }
.group { width: 212px; }
.db { width: 100px; }
.mem { width: 51px; padding-left: 9px; }
.cap { width: 34px; color: #64728c; }

.mini { position: absolute; left: 8px; bottom: 0; display: flex; align-items: center; width: 144px; height: 25px; padding-left: 8px; background: #fff; }
.mini button { width: 12px; margin-right: 33px; }
.mini svg:not(.logo) { width: 12px; height: 12px; fill: none; stroke: #999; }
</style>
